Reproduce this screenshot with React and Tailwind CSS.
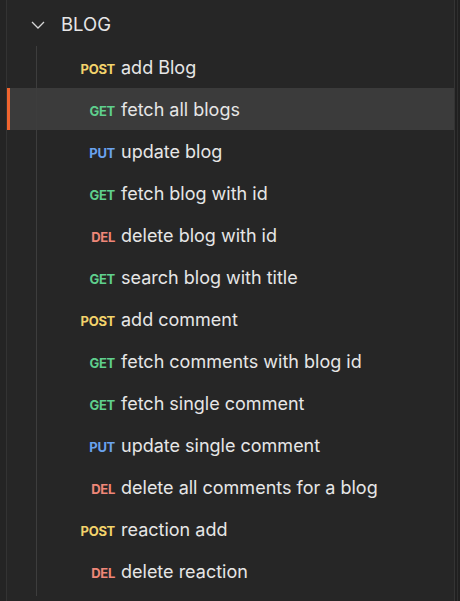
import React from 'react';

const items = [
  { m: 'POST', name: 'add Blog' },
  { m: 'GET', name: 'fetch all blogs', active: true },
  { m: 'PUT', name: 'update blog' },
  { m: 'GET', name: 'fetch blog with id' },
  { m: 'DEL', name: 'delete blog with id' },
  { m: 'GET', name: 'search blog with title' },
  { m: 'POST', name: 'add comment' },
  { m: 'GET', name: 'fetch comments with blog id' },
  { m: 'GET', name: 'fetch single comment' },
  { m: 'PUT', name: 'update single comment' },
  { m: 'DEL', name: 'delete all comments for a blog' },
  { m: 'POST', name: 'reaction add' },
  { m: 'DEL', name: 'delete reaction' },
];

const colors = {
  POST: 'text-[#f3d36b]',
  GET: 'text-[#5fcf8d]',
  PUT: 'text-[#6aa2ee]',
  DEL: 'text-[#ef8678]',
};

function Row({ item }) {
  return (
    <div className={`relative flex h-[42px] items-center ${item.active ? 'bg-[#3b3b3b]' : ''}`}>
      {item.active && <div className="absolute left-0 top-0 h-full w-[3px] bg-[#f0652f]" />}
      <div className="flex h-full w-[29px] shrink-0" />
      <div className="h-full w-px shrink-0 bg-[#3d3d3d]" />
      <div className="flex items-baseline">
        <div className="w-[78px] shrink-0 text-right text-[13px] font-bold tracking-[-0.3px]">
          <span className={colors[item.m]}>{item.m}</span>
        </div>
        <div className="pl-[6px] text-[18px] text-[#e6e6e6]">{item.name}</div>
      </div>
    </div>
  );
}

export default function App() {
  return (
    <div className="flex h-[601px] w-[460px] overflow-hidden bg-[#262626] font-['Inter',sans-serif]">
      <div className="w-[6px] shrink-0 bg-[#242424]" />
      <div className="w-px shrink-0 bg-[#333333]" />
      <div className="flex-1 pt-[4px]">
        <div className="flex h-[42px] items-center">
          <div className="ml-[24px] mr-[16px] flex w-[14px] shrink-0">
            <svg width="14" height="8" viewBox="0 0 14 8" fill="none" stroke="#d6d6d6" strokeWidth="1.3">
              <path d="M1 1l6 6 6-6" />
            </svg>
          </div>
          <div className="text-[18.5px] text-[#e6e6e6]">BLOG</div>
        </div>
        {items.map((it, i) => (
          <Row key={i} item={it} />
        ))}
        <div className="ml-[29px] h-[4px] w-px bg-[#3d3d3d]" />
      </div>
      <div className="w-px shrink-0 bg-[#343434]" />
      <div className="flex w-[5px] shrink-0 bg-[#202020]">
        <div className="ml-[2px] w-px bg-[#2e2e2e]" />
      </div>
    </div>
  );
}
